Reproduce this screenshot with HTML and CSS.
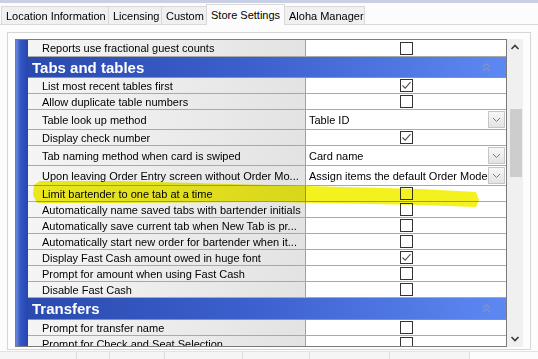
FILE: index.html
```html
<!DOCTYPE html>
<html lang="en">
<head>
    <meta charset="UTF-8">
    <title>Store Settings</title>
    <link rel="stylesheet" href="styles.css">
</head>
<body>
    <div class="topband"></div>
    <div class="tabs">
        <div class="tab t1">Location Information</div>
        <div class="tab t2">Licensing</div>
        <div class="tab t3">Custom</div>
        <div class="tab t4 active">Store Settings</div>
        <div class="tab t5">Aloha Manager</div>
    </div>

    <div class="frame">
        <div class="grid">
            <div class="strip"></div>
            <div class="rows">
                <div class="row r17">
                    <div class="label">Reports use fractional guest counts</div>
                    <div class="value"><span class="cb"></span></div>
                </div>
                <div class="head">
                    <span>Tabs and tables</span>
                    <svg class="fold" width="9" height="9" viewBox="0 0 9 9"><path d="M1 4 L4.5 1 L8 4 M1 8 L4.5 5 L8 8" fill="none" stroke="#7f92c8" stroke-width="1.4"/></svg>
                </div>
                <div class="row">
                    <div class="label">List most recent tables first</div>
                    <div class="value"><span class="cb"><svg width="11" height="11" viewBox="0 0 11 11"><path d="M1.5 5.5 L4.2 8.2 L9.5 2.2" fill="none" stroke="#505050" stroke-width="1.1"/></svg></span></div>
                </div>
                <div class="row">
                    <div class="label">Allow duplicate table numbers</div>
                    <div class="value"><span class="cb"></span></div>
                </div>
                <div class="row tall">
                    <div class="label">Table look up method</div>
                    <div class="value drop"><span>Table ID</span><span class="btn"><svg width="9" height="6" viewBox="0 0 9 6"><path d="M1 1 L4.5 4.5 L8 1" fill="none" stroke="#7a7a7a" stroke-width="1"/></svg></span></div>
                </div>
                <div class="row">
                    <div class="label">Display check number</div>
                    <div class="value"><span class="cb"><svg width="11" height="11" viewBox="0 0 11 11"><path d="M1.5 5.5 L4.2 8.2 L9.5 2.2" fill="none" stroke="#505050" stroke-width="1.1"/></svg></span></div>
                </div>
                <div class="row tall">
                    <div class="label">Tab naming method when card is swiped</div>
                    <div class="value drop"><span>Card name</span><span class="btn"><svg width="9" height="6" viewBox="0 0 9 6"><path d="M1 1 L4.5 4.5 L8 1" fill="none" stroke="#7a7a7a" stroke-width="1"/></svg></span></div>
                </div>
                <div class="row tall">
                    <div class="label">Upon leaving Order Entry screen without Order Mo...</div>
                    <div class="value drop"><span>Assign items the default Order Mode</span><span class="btn"><svg width="9" height="6" viewBox="0 0 9 6"><path d="M1 1 L4.5 4.5 L8 1" fill="none" stroke="#7a7a7a" stroke-width="1"/></svg></span></div>
                </div>
                <div class="row">
                    <div class="label">Limit bartender to one tab at a time</div>
                    <div class="value"><span class="cb"></span></div>
                </div>
                <div class="row">
                    <div class="label">Automatically name saved tabs with bartender initials</div>
                    <div class="value"><span class="cb"></span></div>
                </div>
                <div class="row">
                    <div class="label">Automatically save current tab when New Tab is pr...</div>
                    <div class="value"><span class="cb"></span></div>
                </div>
                <div class="row">
                    <div class="label">Automatically start new order for bartender when it...</div>
                    <div class="value"><span class="cb"></span></div>
                </div>
                <div class="row">
                    <div class="label">Display Fast Cash amount owed in huge font</div>
                    <div class="value"><span class="cb"><svg width="11" height="11" viewBox="0 0 11 11"><path d="M1.5 5.5 L4.2 8.2 L9.5 2.2" fill="none" stroke="#505050" stroke-width="1.1"/></svg></span></div>
                </div>
                <div class="row">
                    <div class="label">Prompt for amount when using Fast Cash</div>
                    <div class="value"><span class="cb"></span></div>
                </div>
                <div class="row">
                    <div class="label">Disable Fast Cash</div>
                    <div class="value"><span class="cb"></span></div>
                </div>
                <div class="head h22">
                    <span>Transfers</span>
                    <svg class="fold" width="9" height="9" viewBox="0 0 9 9"><path d="M1 4 L4.5 1 L8 4 M1 8 L4.5 5 L8 8" fill="none" stroke="#7f92c8" stroke-width="1.4"/></svg>
                </div>
                <div class="row">
                    <div class="label">Prompt for transfer name</div>
                    <div class="value"><span class="cb"></span></div>
                </div>
                <div class="row">
                    <div class="label">Prompt for Check and Seat Selection</div>
                    <div class="value"><span class="cb"></span></div>
                </div>
            </div>
        </div>
        <div class="scroll">
            <svg class="arrow" width="16" height="16" viewBox="0 0 16 16"><path d="M4.5 10 L8 6.5 L11.5 10" fill="none" stroke="#3a3a3a" stroke-width="1.6"/></svg>
            <div class="track"><div class="thumb"></div></div>
            <svg class="arrow" width="16" height="16" viewBox="0 0 16 16"><path d="M4.5 6 L8 9.5 L11.5 6" fill="none" stroke="#3a3a3a" stroke-width="1.6"/></svg>
        </div>
    </div>

    <div class="bottomtabs">
        <div class="btab w77"></div>
        <div class="btab w33"></div>
        <div class="btab w55"></div>
        <div class="btab w78"></div>
        <div class="btab w67"></div>
        <div class="btab w80"></div>
        <div class="btab w80"></div>
    </div>

    <!-- marker stroke drawn over the screenshot -->
    <svg class="marker" width="538" height="359" viewBox="0 0 538 359">
        <path d="M34 185 L40 181 L120 181 L270 185 L420 189 L476 192 L479 200 L476 207 L420 205 L270 202 L120 203 L37 203 L33 195 Z" fill="#f4f21e"/>
    </svg>
</body>
</html>
```

FILE: styles.css
```css
body{
    margin: 0;
    width: 538px;
    height: 359px;
    overflow: hidden;
    position: relative;
    background: #fcfcfc;
    font-family: "Liberation Sans", Arial, sans-serif;
    font-size: 11px;
    color: #000;
}
.topband{
    height: 3px;
    background: #c9cfe5;
}
.tabs{
    display: flex;
    align-items: flex-end;
    height: 21px;
    padding-left: 1px;
    border-bottom: 1px solid #d9d9d9;
}
.tab{
    height: 18px;
    line-height: 18px;
    box-sizing: border-box;
    padding: 0 0 0 4px;
    margin-right: -1px;
    border: 1px solid #d9d9d9;
    border-bottom: 0;
    background: #f0f0f0;
    white-space: nowrap;
}
.t1{ width: 108px; }
.t2{ width: 54px; }
.t3{ width: 46px; }
.t4{ width: 79px; }
.t5{ width: 81px; }
.tab.active{
    position: relative;
    height: 21px;
    line-height: 20px;
    margin-bottom: -1px;
    background: #fcfcfc;
    z-index: 1;
}

/* outer frame around the property grid */
.frame{
    display: flex;
    width: 524px;
    height: 318px;
    box-sizing: border-box;
    margin: 7px 0 0 7px;
    padding: 6px 7px 2px 7px;
    border: 1px solid #d6d6d6;
    background: #fdfdfd;
}
.grid{
    display: flex;
    width: 492px;
    height: 308px;
    box-sizing: border-box;
    border: 1px solid #7a7a7a;
    overflow: hidden;
}
.strip{
    width: 12px;
    flex: none;
    background: linear-gradient(to right, #6a88de 0, #3557c4 35%, #2545b0 100%);
}
.rows{
    flex: 1;
    min-width: 0;
}
.row{
    display: flex;
    height: 16px;
    box-sizing: border-box;
    border-bottom: 1px solid #a9a9a9;
}
.row.r17{
    height: 17px;
}
.row.tall{
    height: 20px;
}
.label{
    width: 278px;
    flex: none;
    box-sizing: border-box;
    padding-left: 14px;
    border-right: 1px solid #a0a0a0;
    background: linear-gradient(to right, #f5f5f5, #e3e3e3);
    white-space: nowrap;
    overflow: hidden;
    display: flex;
    align-items: center;
}
.value{
    flex: 1;
    background: #fff;
    display: flex;
    align-items: center;
    justify-content: center;
}
.cb{
    width: 11px;
    height: 11px;
    border: 1px solid #333;
    background: #fff;
    display: block;
}
.cb svg{
    display: block;
}
.value.drop{
    justify-content: space-between;
    padding: 1px 1px 1px 3px;
    white-space: nowrap;
}
.btn{
    width: 15px;
    height: 15px;
    border: 1px solid #c6c6c6;
    background: linear-gradient(#f7f7f7, #e3e3e3);
    display: flex;
    align-items: center;
    justify-content: center;
}
.head{
    display: flex;
    align-items: center;
    justify-content: space-between;
    height: 21px;
    box-sizing: border-box;
    padding: 0 15px 0 4px;
    border-bottom: 1px solid #8090b8;
    background: linear-gradient(to right, #2a4aae 0, #3b5fcc 45%, #5d88f2 100%);
    color: #fff;
    font-size: 15px;
    font-weight: bold;
}
.head.h22{
    height: 22px;
}
.fold{
    display: block;
}

/* vertical scroll bar */
.scroll{
    width: 16px;
    height: 308px;
    display: flex;
    flex-direction: column;
    background: #f0f0f0;
}
.arrow{
    display: block;
    flex: none;
}
.track{
    flex: 1;
    padding: 54px 1px 0 3px;
}
.thumb{
    height: 68px;
    background: #cdcdcd;
}

.bottomtabs{
    display: flex;
    margin-top: 1px;
    height: 10px;
    border-top: 1px solid #e3e3e3;
}
.btab{
    height: 10px;
    box-sizing: border-box;
    border-right: 1px solid #dcdcdc;
    background: #f5f5f5;
}
.w77{ width: 77px; }
.w33{ width: 33px; }
.w55{ width: 55px; }
.w78{ width: 78px; }
.w67{ width: 67px; }
.w80{ width: 80px; }

.marker{
    position: absolute;
    left: 0;
    top: 0;
    pointer-events: none;
    mix-blend-mode: multiply;
}
```
